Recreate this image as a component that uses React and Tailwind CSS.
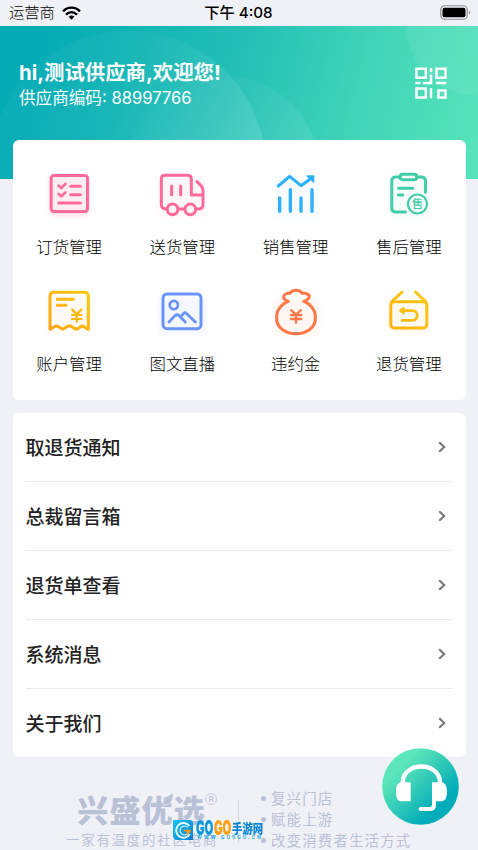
import clsx from 'clsx'

const entries = [
  { label: '订货管理', Icon: OrderIcon },
  { label: '送货管理', Icon: TruckIcon },
  { label: '销售管理', Icon: SalesIcon },
  { label: '售后管理', Icon: AfterSaleIcon },
  { label: '账户管理', Icon: AccountIcon },
  { label: '图文直播', Icon: LiveIcon },
  { label: '违约金', Icon: PenaltyIcon },
  { label: '退货管理', Icon: ReturnIcon },
]

const rows = ['取退货通知', '总裁留言箱', '退货单查看', '系统消息', '关于我们']

const slogans = ['复兴门店', '赋能上游', '改变消费者生活方式']

export default function App() {
  return (
    <main className="relative h-[850px] w-[478px] overflow-hidden bg-[#f0f1f6] font-['Inter','Noto_Sans_CJK_SC',sans-serif] text-[#222]">
      <StatusBar />
      <Header />

      {/* Accesos principales */}
      <section className="relative mx-[12.5px] -mt-[39px] grid h-[260px] grid-cols-4 content-start rounded-md bg-white pt-[26px]">
        {entries.map(({ label, Icon }) => (
          <div key={label} className="flex h-[117px] flex-col items-center">
            <Icon />
            <span className="mt-[13px] text-[16.4px] leading-6 font-light text-black">{label}</span>
          </div>
        ))}
      </section>

      {/* Lista */}
      <section className="mx-[12.5px] mt-[13px] h-[344px] rounded-md bg-white px-[13px] pt-px">
        {rows.map((row, i) => (
          <div
            key={row}
            className={clsx('flex h-[68.75px] items-center justify-between', i < rows.length - 1 && 'border-b border-[#ebebed]')}
          >
            <span className="pt-1 text-[19px] leading-7 font-medium">{row}</span>
            <svg width="8" height="12" viewBox="0 0 8 12" fill="none" className="mr-[7px]">
              <path d="M1.2 1.2L6.2 6L1.2 10.8" stroke="#777" strokeWidth="2.1" />
            </svg>
          </div>
        ))}
      </section>

      <Footer />
      <SupportButton />
    </main>
  )
}

function StatusBar() {
  return (
    <div className="grid h-[25.5px] grid-cols-3 items-center pr-[7px] pl-[9px] text-black">
      <div className="flex items-center gap-[7px]">
        <span className="text-[15.3px] leading-6 font-light">运营商</span>
        <svg width="19" height="14" viewBox="0 0 57 42" fill="none" stroke="#000" strokeWidth="7">
          <path d="M3 16C17 1 40 1 54 16" />
          <path d="M12 26C22 16 35 16 45 26" />
          <path d="M20 32C25 27 32 27 37 32L28.500 41Z" fill="#000" stroke="none" />
        </svg>
      </div>
      <span className="-ml-[3px] pt-px text-center text-[15.2px] leading-6 font-medium whitespace-nowrap">下午 4:08</span>
      <svg width="31" height="15" viewBox="0 0 31 15" className="justify-self-end">
        <rect x="0.750" y="0.750" width="26.500" height="13.500" rx="4" fill="none" stroke="#8f9093" strokeWidth="1.200" />
        <rect x="2.500" y="2.700" width="23" height="9.600" rx="2" fill="#000" />
        <path d="M29 5.500C30.600 6.500 30.600 8.500 29 9.500Z" fill="#8f9093" />
      </svg>
    </div>
  )
}

function Header() {
  return (
    <header className="relative h-[153px] overflow-hidden">
      <svg width="478" height="153" viewBox="0 25.500 478 153" className="absolute inset-0">
        <defs>
          <linearGradient id="sky" gradientUnits="userSpaceOnUse" x1="30" y1="70" x2="465" y2="185">
            <stop offset="0" stopColor="#04abb5" />
            <stop offset="0.450" stopColor="#24c0b6" />
            <stop offset="0.720" stopColor="#40d4b8" />
            <stop offset="1" stopColor="#55e3b9" />
          </linearGradient>
          <linearGradient id="bubble" x1="0" y1="0.200" x2="1" y2="0.700">
            <stop offset="0" stopColor="#fff" stopOpacity="0.030" />
            <stop offset="0.400" stopColor="#fff" stopOpacity="0.030" />
            <stop offset="1" stopColor="#fff" stopOpacity="0.140" />
          </linearGradient>
          <linearGradient id="ripple" x1="0.300" y1="0" x2="0.700" y2="0.500">
            <stop offset="0" stopColor="#fff" stopOpacity="0.010" />
            <stop offset="1" stopColor="#fff" stopOpacity="0.080" />
          </linearGradient>
        </defs>
        <rect y="25" width="478" height="154" fill="url(#sky)" />
        <circle cx="128" cy="168" r="138" fill="url(#bubble)" />
        <circle cx="223" cy="172" r="97" fill="url(#ripple)" />
        <circle cx="477" cy="24" r="71" fill="#fff" opacity="0.070" />
      </svg>
      <div className="relative flex items-start justify-between pt-[33px] pr-[31px] pl-[19px] text-white">
        <div>
          <h1 className="text-[20.4px] leading-7 font-bold whitespace-nowrap">hi,测试供应商,欢迎您!</h1>
          <p className="text-[16.6px] leading-[22px] whitespace-nowrap">供应商编码: 88997766</p>
        </div>
        <svg width="32" height="32" viewBox="530 200 96 96" className="mt-2" fill="none" stroke="#fff" strokeWidth="7.5">
          <path d="M534.5 205H562.5V232H534.5ZM594.5 205H621.5V232H594.5ZM534.5 264.500H562.5V291.500H534.5ZM600.5 270.500H621.5V291.500H600.500Z" />
          <path d="M578 203V216M578 223V248H553M531 248H546M593 248H624M578 264V294" />
        </svg>
      </div>
    </header>
  )
}

// Los iconos comparten lienzo de 168 unidades mostrado a 56px
function Tile({ viewBox, color, children }) {
  return (
    <svg
      width="56"
      height="56"
      viewBox={viewBox}
      fill="none"
      stroke={color}
      strokeWidth="9"
      strokeLinecap="round"
      strokeLinejoin="round"
      className="shrink-0"
    >
      {children}
    </svg>
  )
}

function OrderIcon() {
  return (
    <Tile viewBox="33 18 168 168" color="#ff6b99">
      <defs>
        <filter id="glow" x="-30%" y="-30%" width="160%" height="160%">
          <feGaussianBlur stdDeviation="6" />
        </filter>
      </defs>
      <rect x="59" y="52" width="118" height="116" rx="10" fill="#ffd0de" stroke="none" opacity="0.700" filter="url(#glow)" />
      <rect x="63.500" y="46.500" width="109" height="108" rx="8" fill="#ffedf2" />
      <path d="M86 77L94 84L106 72M86 102L94 109L106 97" strokeWidth="8" />
      <path d="M122 79H151M122 104H151M86 129H151" />
    </Tile>
  )
}

function TruckIcon() {
  return (
    <Tile viewBox="373 18 168 168" color="#ff6b99">
      <rect x="385" y="50" width="140" height="125" rx="10" fill="#fff1f5" stroke="none" opacity="0.600" filter="url(#glow)" />
      <path d="M409 147C399 146 395 142 395 134V57C395 50 399 46 406 46H473C481 46 485 50 485 57V105H519" />
      <path d="M502 65L514 77C519 82 520 85 520 92V134C520 142 514 147 503 147M448 147H462" />
      <path d="M426 78V104M453 78V104" />
      <circle cx="428.500" cy="148" r="16" />
      <circle cx="482" cy="148" r="16" />
    </Tile>
  )
}

function SalesIcon() {
  return (
    <Tile viewBox="53 18 168 168" color="#2eb0ff">
      <rect x="72" y="55" width="135" height="120" rx="10" fill="#f2faff" stroke="none" opacity="0.600" filter="url(#glow)" />
      <path d="M84 78L118 49L152 77L184 54" />
      <path d="M170 48H190V66Z" fill="#2eb0ff" strokeWidth="4" />
      <path d="M88 114V154M120 89V154M152 114V154M185 89V154" strokeWidth="10" />
    </Tile>
  )
}

function AfterSaleIcon() {
  return (
    <Tile viewBox="392.600 18 168 168" color="#40cda8">
      <rect x="415" y="60" width="125" height="115" rx="10" fill="#ecfaf6" stroke="none" opacity="0.500" filter="url(#glow)" />
      <path d="M449 51H437C429 51 425 55 425 63V145C425 153 429 156 437 156H466M500 51H513C521 51 526 55 526 63V97" />
      <rect x="450" y="43" width="50" height="16" rx="7" />
      <path d="M445 85H488M445 105H458" />
      <circle cx="502" cy="132" r="28.500" strokeWidth="6.500" />
      <text
        x="502"
        y="145"
        textAnchor="middle"
        fill="#40cda8"
        stroke="none"
        className="font-['Noto_Sans_CJK_SC',sans-serif] text-[34px] font-medium"
      >
        售
      </text>
    </Tile>
  )
}

function AccountIcon() {
  return (
    <Tile viewBox="33 22 168 168" color="url(#amber)">
      <defs>
        <linearGradient id="amber" gradientUnits="userSpaceOnUse" x1="58" y1="165" x2="178" y2="45">
          <stop offset="0" stopColor="#ffa416" />
          <stop offset="1" stopColor="#ffca10" />
        </linearGradient>
      </defs>
      <rect x="50" y="60" width="135" height="115" rx="10" fill="#fff6e9" stroke="none" opacity="0.450" filter="url(#glow)" />
      <path d="M60 161V62C60 54 64 50 72 50H163C171 50 175 54 175 62V161L163 154Q157 149 151 154L143 159Q138 162 132 157L125 153Q118 148 111 153L103 158Q98 162 92 157L85 153Q79 149 73 153Z" />
      <path d="M82 71H130M82 89H108" />
      <path d="M127 102L140 116L154 102" strokeWidth="7.500" />
      <path d="M126 118H155M126 130H155M140.500 116V138" strokeWidth="6.500" />
    </Tile>
  )
}

function LiveIcon() {
  return (
    <Tile viewBox="373 22 168 168" color="#6b93fc">
      <rect x="385" y="65" width="145" height="110" rx="10" fill="#f0f4ff" stroke="none" opacity="0.700" filter="url(#glow)" />
      <rect x="400" y="55" width="114" height="104" rx="12" />
      <circle cx="432.500" cy="88" r="12.500" strokeWidth="8" />
      <path d="M418 139L437 119Q442 115 447 119L467 139M454 123L461 114Q466 109 471 114L497 139" strokeWidth="8.500" />
    </Tile>
  )
}

function PenaltyIcon() {
  return (
    <Tile viewBox="53 22 168 168" color="#ff7849">
      <rect x="70" y="70" width="135" height="108" rx="10" fill="#fff1ec" stroke="none" opacity="0.600" filter="url(#glow)" />
      <path d="M113 77C69 96 71 145 98 163C121 178 153 178 176 163C203 145 205 96 161 77" />
      <path d="M113 77C109 75 104 73 101 69C97 59 106 51 119 53C125 41 149 41 155 53C168 51 180 57 176 66C173 72 167 75 161 77" />
      <path d="M123 104L137 117L151 104M122 118H153M122 130H153M137 117V141" strokeWidth="7" />
    </Tile>
  )
}

function ReturnIcon() {
  return (
    <Tile viewBox="392.600 22 168 168" color="url(#gold)">
      <defs>
        <linearGradient id="gold" gradientUnits="userSpaceOnUse" x1="420" y1="160" x2="530" y2="50">
          <stop offset="0" stopColor="#ffb310" />
          <stop offset="1" stopColor="#ffc812" />
        </linearGradient>
      </defs>
      <rect x="412" y="80" width="125" height="95" rx="10" fill="#fff8e8" stroke="none" opacity="0.600" filter="url(#glow)" />
      <rect x="422" y="78" width="108" height="79" rx="10" />
      <path d="M425 78L456 49M527 78L496 49" />
      <path d="M456 105H487C506 105 506 134 487 134H456" strokeWidth="8.500" />
      <path d="M449 105L461 96V114Z" fill="#ffbc10" stroke="#ffbc10" strokeWidth="5" />
    </Tile>
  )
}

function Footer() {
  return (
    <footer className="relative mt-[30px] flex text-[#b9c1d6]">
      <div className="flex w-[172px] flex-col items-end pt-[6px]">
        <div className="relative mr-[-34px] h-[38px]">
          <span className="text-[31px] leading-[36px] font-black tracking-[1.2px] whitespace-nowrap">兴盛优选</span>
          {/* Hoja sobre el logotipo */}
          <svg width="12" height="13" viewBox="0 0 12 13" className="absolute top-0 left-[85px]">
            <path d="M11 0C12 8 8 12 1 12C0 6 4 4 11 0Z" fill="#b9c1d6" stroke="#f0f1f6" strokeWidth="0.700" />
          </svg>
          <span className="absolute top-0 -right-[11px] flex size-[12px] items-center justify-center rounded-full border border-[#c5ccdd] text-[8px] leading-none font-medium">
            R
          </span>
        </div>
        <p className="mr-[-46px] text-[13.500px] leading-[18px] tracking-[1.700px] whitespace-nowrap">一家有温度的社区电商</p>
      </div>
      <div className="mt-[13px] ml-[66px] h-[43px] w-px bg-[#d4d9e5]" />
      <ul className="ml-[22px] pt-px text-[14.500px] leading-[21px] tracking-[1.100px] whitespace-nowrap">
        {slogans.map((line) => (
          <li key={line} className="flex items-center gap-[5px]">
            <i className="size-[5px] rounded-full bg-[#b9c1d6]" />
            {line}
          </li>
        ))}
      </ul>

      <Watermark />
    </footer>
  )
}

function Watermark() {
  return (
    <div className="absolute top-[33px] left-[173px] flex items-start gap-[3px]">
      <svg width="20" height="20" viewBox="0 0 60 60">
        <defs>
          <linearGradient id="badge" x1="0" y1="0" x2="1" y2="1">
            <stop offset="0" stopColor="#16c5f5" />
            <stop offset="1" stopColor="#087bd0" />
          </linearGradient>
        </defs>
        <path d="M0 0H50Q60 0 60 10V60H12Q0 60 0 46Z" fill="url(#badge)" />
        <path d="M49 18A22 22 0 1 0 50 43" fill="none" stroke="#e8fbff" strokeWidth="6" />
        <path d="M44 23A13 13 0 1 0 43 41" fill="none" stroke="#b8ecfb" strokeWidth="4" />
        <path d="M29 29H54Q52 43 39 44L43 35Q33 36 29 29Z" fill="#ff9d12" />
      </svg>
      <div className="relative">
        <p className="flex h-[17px] items-center leading-[17px] font-black whitespace-nowrap">
          <span className="inline-block w-[18px] origin-left scale-x-[0.570] text-[20px] text-[#0997de]">GO</span>
          <span className="inline-block w-[18px] origin-left scale-x-[0.570] text-[20px] text-[#ff9f0c]">GO</span>
          <span className="inline-block w-[31px] origin-left scale-x-[0.800] text-[13px] text-[#0c86d2]">手游网</span>
        </p>
        <p className="absolute top-[15px] left-px text-[4.500px] leading-[6px] font-bold tracking-[2.200px] whitespace-nowrap text-[#20ace5]">
          WWW.GO9GO.CN
        </p>
      </div>
    </div>
  )
}

function SupportButton() {
  return (
    <button className="absolute top-[748px] left-[382px] size-[77px]" aria-label="客服">
      <svg width="77" height="77" viewBox="426 38 231 231">
        <defs>
          <linearGradient id="support" x1="0.150" y1="0.150" x2="0.850" y2="0.850">
            <stop offset="0.140" stopColor="#5ce6ba" />
            <stop offset="0.850" stopColor="#02acb8" />
          </linearGradient>
        </defs>
        <circle cx="541.500" cy="153.500" r="115" fill="url(#support)" />
        <path d="M488 144V140C491 78 597 78 600 140V144" fill="none" stroke="#fff" strokeWidth="13" />
        <path d="M512 141V198H486C473 198 468 188 468 170C468 151 473 141 486 141ZM576 141V198H602C615 198 621 188 621 170C621 151 615 141 602 141Z" fill="#fff" />
        <path d="M582 195V208C582 217 578 221 569 221H542" fill="none" stroke="#fff" strokeWidth="12" strokeLinecap="round" />
      </svg>
    </button>
  )
}
